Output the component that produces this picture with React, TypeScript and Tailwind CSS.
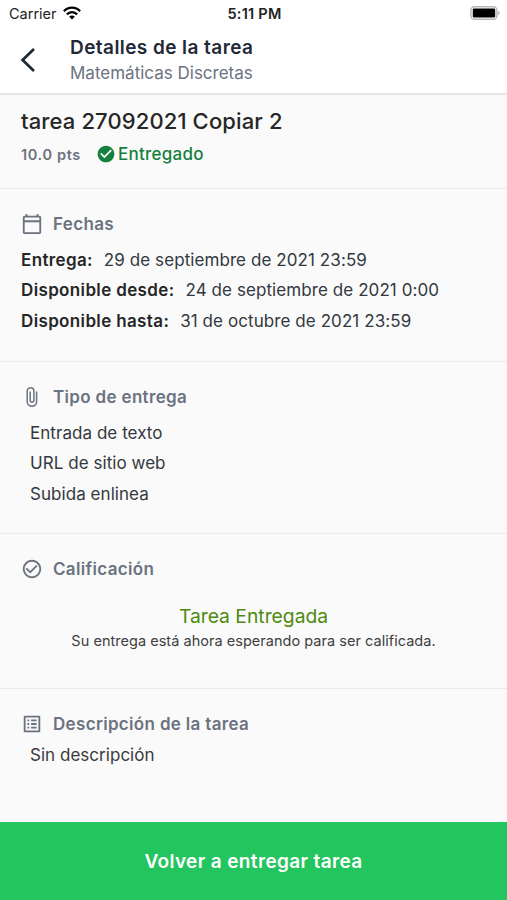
import React from 'react';
import {
  MdCheckCircle,
  MdCheckCircleOutline,
  MdOutlineCalendarToday,
  MdOutlineListAlt,
} from 'react-icons/md';

interface DateRow {
  label: string;
  value: string;
}

const dates: DateRow[] = [
  { label: 'Entrega:', value: '29 de septiembre de 2021 23:59' },
  { label: 'Disponible desde:', value: '24 de septiembre de 2021 0:00' },
  { label: 'Disponible hasta:', value: '31 de octubre de 2021 23:59' },
];

const submissionTypes = ['Entrada de texto', 'URL de sitio web', 'Subida enlinea'];

function StatusBar() {
  return (
    <div className="grid h-[28px] grid-cols-3 items-center pl-[9px] pr-[7px] text-black">
      <div className="flex items-center gap-[6px] text-[#222]">
        <span className="text-[14.5px] leading-none">Carrier</span>
        <svg className="mb-[2px] text-black" width="18" height="14" viewBox="0 0 18 14" fill="none" stroke="currentColor" strokeWidth="2.4">
          <path d="M0.9 5.2C5.4 0.4 12.6 0.4 17.1 5.2" />
          <path d="M3.9 8.4C6.8 5.4 11.2 5.4 14.1 8.4" />
          <path d="M6.2 10.7C7.8 9.1 10.2 9.1 11.8 10.7L9 13.6Z" fill="currentColor" stroke="none" />
        </svg>
      </div>
      <span className="text-center text-[14.5px] font-semibold leading-none tracking-[0.25px] text-[#222]">5:11 PM</span>
      <svg className="mb-[2px] justify-self-end" width="30" height="14" viewBox="0 0 30 14">
        <rect x="0.9" y="0.7" width="26" height="12.6" rx="3.6" fill="#fff" stroke="#b8b8b8" strokeWidth="1.5" />
        <rect x="2.8" y="2.4" width="22.4" height="9.2" rx="1.4" fill="#000" />
        <path d="M28.2 4.8C30.2 5.6 30.2 8.4 28.2 9.2Z" fill="#b8b8b8" />
      </svg>
    </div>
  );
}

function PaperclipIcon() {
  return (
    <svg width="22" height="22" viewBox="0 0 22 22" fill="none" stroke="currentColor" strokeWidth="1.5">
      <path d="M15.6 5.5V15.6C15.6 18.2 13.6 20.2 11 20.2S6.2 18.2 6.2 15.6V5.1C6.2 3.2 7.7 1.7 9.6 1.7S12.9 3.2 12.9 5.1V14.2C12.9 15.3 12.1 16.1 11 16.1S9.2 15.3 9.2 14.2V5.5" />
    </svg>
  );
}

function SectionTitle({ icon, title }: { icon: React.ReactNode; title: string }) {
  return (
    <div className="flex h-[24px] items-center gap-[10px] text-[#6b7280]">
      <span className="pb-[2px]">{icon}</span>
      <h2 className="text-[17px] font-semibold tracking-[0.33px]">{title}</h2>
    </div>
  );
}

function App() {
  return (
    <div className="flex h-[900px] w-[507px] flex-col overflow-hidden bg-[#fafafa] font-['Inter',sans-serif] text-[#333840]">
      <header className="h-[95px] shrink-0 border-b-2 border-[#e6e6e6] bg-white">
        <StatusBar />
        <div className="flex items-center pl-[20px] pt-[7px]">
          <svg className="mb-[2px] mr-[34px] shrink-0" width="16" height="26" viewBox="0 0 16 26" fill="none" stroke="#1f2937" strokeWidth="2.8">
            <path d="M14 2L2.6 13L14 24" />
          </svg>
          <div>
            <h1 className="text-[19px] font-semibold leading-[26px] tracking-[0.43px] text-[#1f2937]">Detalles de la tarea</h1>
            <p className="text-[17px] leading-[25px] text-[#6b7280]">Matemáticas Discretas</p>
          </div>
        </div>
      </header>

      <section className="h-[94px] shrink-0 border-b border-[#ebebeb] px-[21px] pt-[12px]">
        <h2 className="text-[22px] font-medium leading-[29px] tracking-[0.12px] text-[#262626]">tarea 27092021 Copiar 2</h2>
        <div className="mt-[7px] flex h-[24px] items-center">
          <span className="text-[14.5px] font-semibold tracking-[0.65px] text-[#6b7280]">10.0 pts</span>
          <MdCheckCircle className="mb-[2px] ml-[15px] mr-[2px] text-[20px] text-[#15803d]" />
          <span className="text-[17px] font-medium tracking-[0.25px] text-[#15803d]">Entregado</span>
        </div>
      </section>

      <section className="h-[173px] shrink-0 border-b border-[#ebebeb] px-[21px] pt-[24px]">
        <SectionTitle icon={<MdOutlineCalendarToday className="text-[22px]" />} title="Fechas" />
        <div className="mt-[8px]">
          {dates.map((row) => (
            <div key={row.label} className="flex h-[30.6px] items-center gap-[11px] text-[17px]">
              <span className="font-semibold tracking-[0.36px] text-[#262626]">{row.label}</span>
              <span className="tracking-[0.08px]">{row.value}</span>
            </div>
          ))}
        </div>
      </section>

      <section className="h-[172px] shrink-0 border-b border-[#ebebeb] px-[21px] pt-[24px]">
        <SectionTitle icon={<PaperclipIcon />} title="Tipo de entrega" />
        <ul className="mt-[8px] pl-[9px]">
          {submissionTypes.map((type) => (
            <li key={type} className="flex h-[30.6px] items-center text-[17px] tracking-[0.05px]">
              {type}
            </li>
          ))}
        </ul>
      </section>

      <section className="h-[155px] shrink-0 border-b border-[#ebebeb] px-[21px] pt-[24px]">
        <SectionTitle icon={<MdCheckCircleOutline className="text-[22px]" />} title="Calificación" />
        <div className="mt-[20px] text-center">
          <p className="text-[19.3px] leading-[28px] text-[#4d8a0f]">Tarea Entregada</p>
          <p className="text-[14.5px] leading-[22px] tracking-[0.03px] text-[#404040]">
            Su entrega está ahora esperando para ser calificada.
          </p>
        </div>
      </section>

      <section className="grow px-[21px] pt-[24px]">
        <SectionTitle icon={<MdOutlineListAlt className="text-[22px]" />} title="Descripción de la tarea" />
        <p className="mt-[6px] pl-[9px] text-[17px] leading-[24px] tracking-[0.03px] text-[#3a3a3a]">Sin descripción</p>
      </section>

      <button className="h-[78px] w-full shrink-0 bg-[#22c55e] pt-[2px] text-[19px] font-semibold tracking-[0.37px] text-white">
        Volver a entregar tarea
      </button>
    </div>
  );
}

export default App;
